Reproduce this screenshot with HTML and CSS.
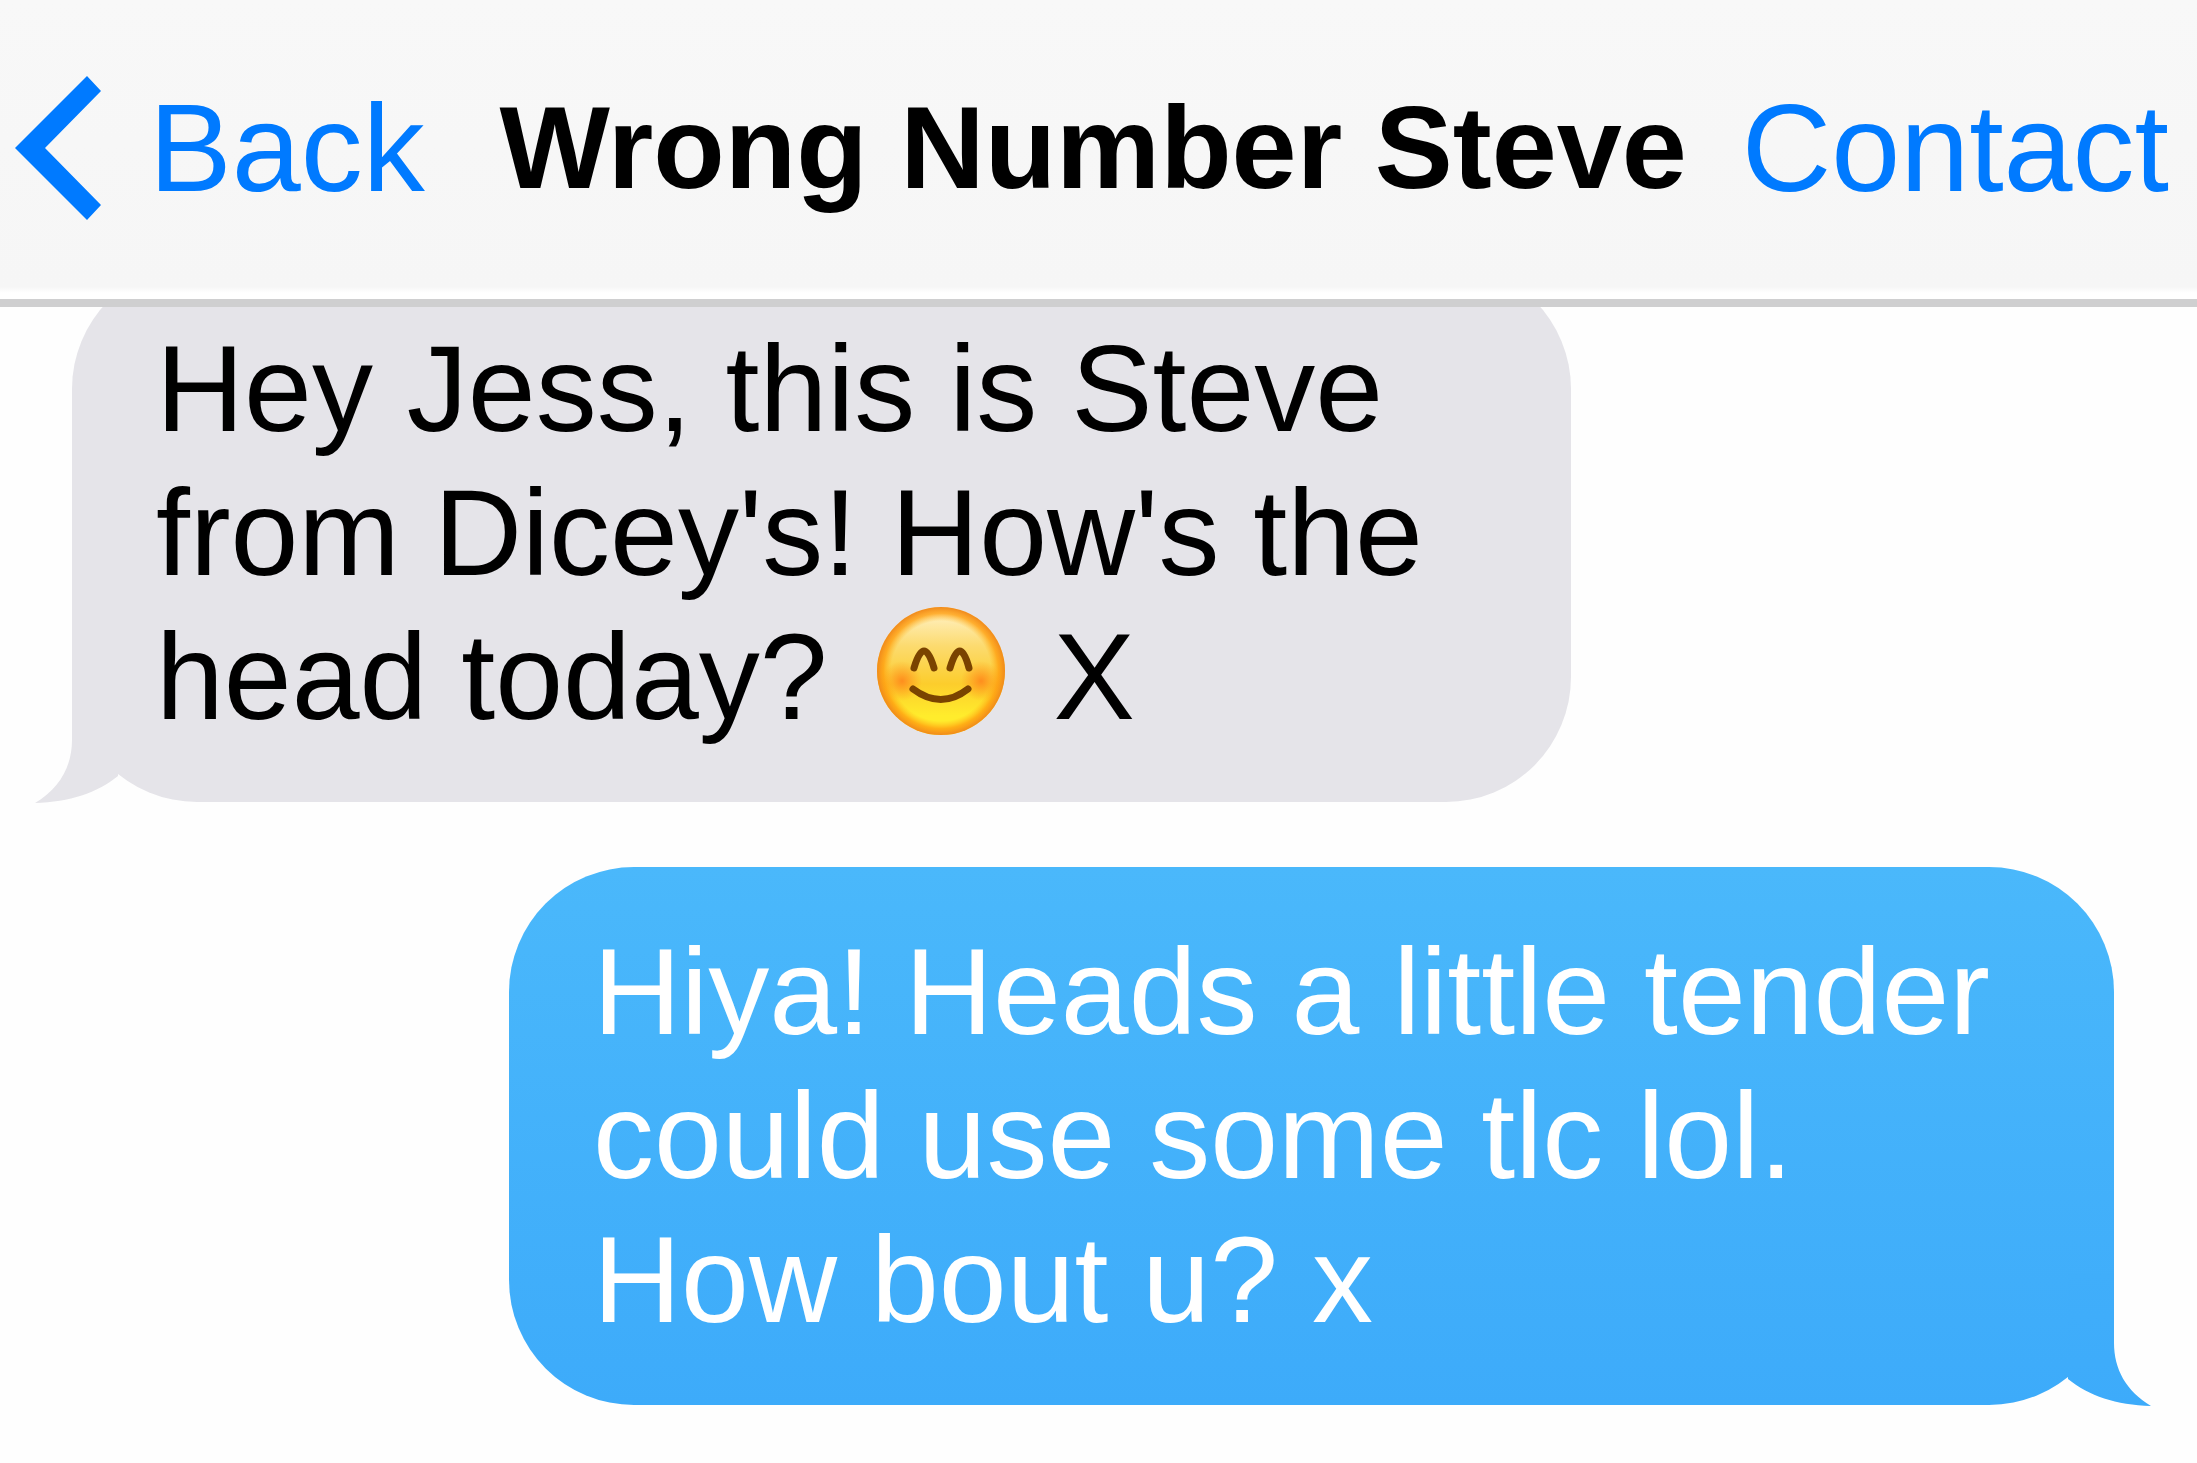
FILE: index.html
```html
<!DOCTYPE html>
<html lang="en">
<head>
  <meta charset="utf-8">
  <meta name="viewport" content="width=device-width, initial-scale=1">
  <title>Wrong Number Steve</title>
  <link rel="stylesheet" href="styles.css">
</head>
<body>
  <header class="navbar">
    <a class="nav-link" href="#back">
      <svg class="chevron" viewBox="0 0 86 144" aria-hidden="true">
        <path d="M0 72 72 0 86 15 30 72 86 129 72 144Z" fill="currentColor"/>
      </svg>
      <span>Back</span>
    </a>
    <h1 class="title">Wrong Number Steve</h1>
    <a class="nav-link" href="#contact">Contact</a>
  </header>

  <main class="thread">
    <div class="bubble received">
      <p class="text">Hey Jess, this is Steve from Dicey's! How's the head today?
        <svg class="emoji" viewBox="0 0 130 130" role="img" aria-label="Smiling face">
          <defs>
            <radialGradient id="rim" cx="50%" cy="50%" r="50%">
              <stop offset="0.78" stop-color="#ffb31a" stop-opacity="0"/>
              <stop offset="0.9" stop-color="#ff9f10" stop-opacity="0.8"/>
              <stop offset="1" stop-color="#f08a1c"/>
            </radialGradient>
            <linearGradient id="face" x1="0" y1="0" x2="0" y2="1">
              <stop offset="0.05" stop-color="#fff0c0"/>
              <stop offset="0.3" stop-color="#fcdb70"/>
              <stop offset="0.6" stop-color="#fccd2c"/>
              <stop offset="0.85" stop-color="#ffec2c"/>
            </linearGradient>
            <radialGradient id="cheek">
              <stop offset="0" stop-color="#ff861c" stop-opacity="0.9"/>
              <stop offset="1" stop-color="#ff961c" stop-opacity="0"/>
            </radialGradient>
          </defs>
          <circle cx="65" cy="65" r="64" fill="url(#face)"/>
          <circle cx="65" cy="65" r="64" fill="url(#rim)"/>
          <circle cx="26" cy="75" r="20" fill="url(#cheek)"/>
          <circle cx="105" cy="75" r="20" fill="url(#cheek)"/>
          <g fill="none" stroke="#7a4300" stroke-width="7" stroke-linecap="round">
            <path d="M38 62Q48 28 58 62"/>
            <path d="M74 62Q84 28 93 62"/>
            <path d="M37 83Q65 104 92 83"/>
          </g>
        </svg>
        X</p>
      <svg class="tail" viewBox="0 0 84 134" aria-hidden="true">
        <path d="M37 0V70C37 96 25 118 0 133C35 132 62 123 83 106V0Z" fill="#e5e4e9"/>
      </svg>
    </div>

    <div class="bubble sent">
      <p class="text">Hiya! Heads a little tender could use some tlc lol. How bout u? x</p>
      <svg class="tail" viewBox="0 0 84 134" aria-hidden="true">
        <defs>
          <linearGradient id="sent-tail" x1="0" y1="0" x2="0" y2="1">
            <stop offset="0" stop-color="#40aefa"/>
            <stop offset="1" stop-color="#3dabfa"/>
          </linearGradient>
        </defs>
        <path d="M37 0V70C37 96 25 118 0 133C35 132 62 123 83 106V0Z" fill="url(#sent-tail)"/>
      </svg>
    </div>
  </main>
</body>
</html>
```
FILE: styles.css
```css
* {
  box-sizing: border-box;
}

body {
  margin: 0;
  background: #fefefe;
  color: #000;
  font-family: "Liberation Sans", Arial, sans-serif;
}

.navbar {
  position: relative;
  z-index: 1;
  display: flex;
  align-items: center;
  justify-content: space-between;
  padding: 76px 28px 79px 15px;
  border-bottom: 8px solid #cfcfd0;
  background: linear-gradient(to top, #fff 6px, #f6f6f6 12px, #f8f8f8);
  line-height: 144px;
  white-space: nowrap;
}

.nav-link {
  display: flex;
  align-items: center;
  gap: 48px;
  color: #007aff;
  font-size: 124px;
  text-decoration: none;
}

.chevron {
  width: 86px;
  height: 144px;
}

.title {
  margin: 0;
  padding-left: 20px;
  font-size: 117px;
  font-weight: bold;
}

/* The first message is scrolled partly beneath the navigation bar. */
.thread {
  display: flex;
  flex-direction: column;
  gap: 65px;
  margin-top: -43px;
  padding: 0 83px 56px 72px;
}

.bubble {
  position: relative;
  padding: 53px 84px;
  border-radius: 125px;
  font-size: 122px;
  line-height: 144px;
}

.received {
  align-self: flex-start;
  width: 73.4%;
  background: #e5e4e9;
}

.sent {
  align-self: flex-end;
  width: 78.6%;
  background: linear-gradient(#4ab8fb, #3dabfa);
  color: #fff;
}

.text {
  margin: 0;
}

.emoji {
  width: 130px;
  height: 130px;
  margin: 0 14px;
  vertical-align: -17px;
}

.tail {
  position: absolute;
  bottom: -2px;
  left: -37px;
  width: 84px;
  height: 134px;
}

.sent .tail {
  right: -37px;
  left: auto;
  transform: scaleX(-1);
}
```
